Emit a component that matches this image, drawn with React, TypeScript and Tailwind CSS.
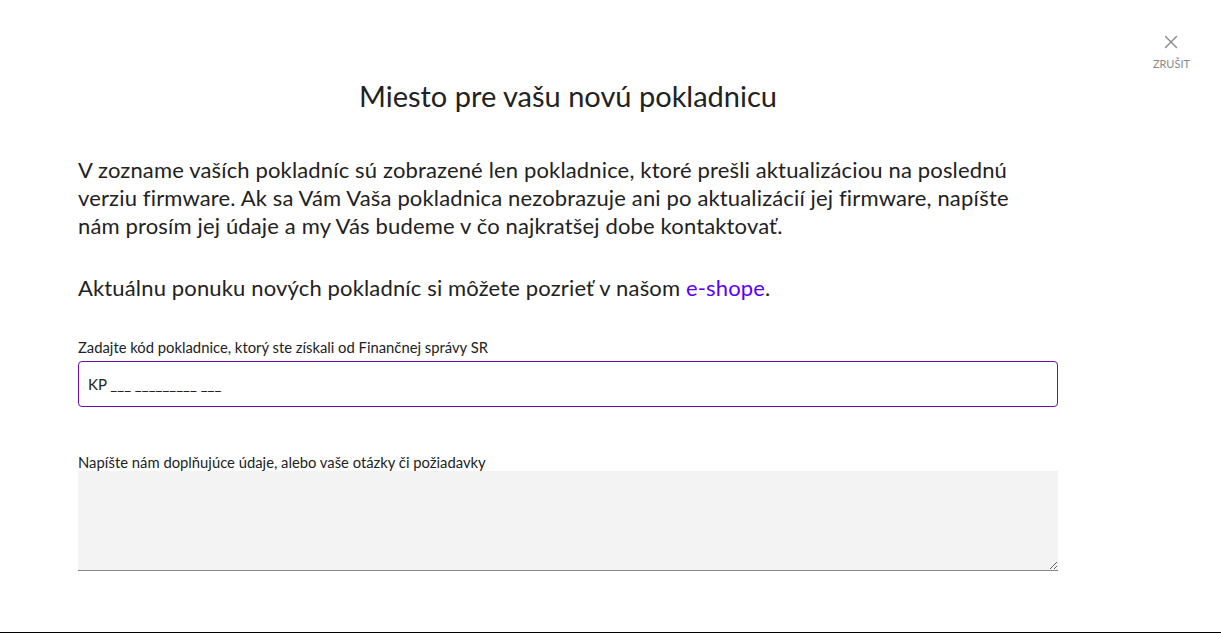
import { X } from "lucide-react";

export default function App() {
    return (
        <div className="relative h-[633px] w-full bg-white border-b border-black font-['Lato',sans-serif] text-[#222]">
            <button className="absolute right-[31px] top-[31px] flex flex-col items-center text-[#888]">
                <X className="w-[22px] h-[22px]" strokeWidth={1.5} />
                <span className="text-[11px] leading-[14px] mt-[4px]">ZRUŠIT</span>
            </button>
            <div className="w-[980px] ml-[78px] pt-[78px]">
                <h1 className="text-center text-[29px] leading-[36px] text-[#222]">Miesto pre vašu novú pokladnicu</h1>
                <p className="mt-[42px] pr-[8px] text-[22px] leading-[28px] tracking-[0.15px]">
                    V zozname vaších pokladníc sú zobrazené len pokladnice, ktoré prešli aktualizáciou na poslednú verziu firmware. Ak sa Vám Vaša pokladnica nezobrazuje ani po aktualizácií jej firmware, napíšte nám prosím jej údaje a my Vás budeme v čo najkratšej dobe kontaktovať.
                </p>
                <p className="mt-[34px] text-[22px] leading-[28px] tracking-[0.15px]">
                    Aktuálnu ponuku nových pokladníc si môžete pozrieť v našom <a className="text-[#5a00ff]">e-shope</a>.
                </p>
                <label className="block mt-[36px] text-[14.8px] leading-[18px]">Zadajte kód pokladnice, ktorý ste získali od Finančnej správy SR</label>
                <input
                    className="mt-[5px] block w-full h-[46px] px-[9px] border border-[#6a0dad] rounded-[4px] text-[15px] outline-none"
                    defaultValue="KP ___ _________ ___"
                />
                <label className="block mt-[46px] text-[14.8px] leading-[18px]">Napíšte nám doplňujúce údaje, alebo vaše otázky či požiadavky</label>
                <textarea className="block w-full h-[100px] bg-[#f3f3f3] border-b border-[#888] outline-none px-[9px] py-[8px] text-[15px]" />
            </div>
        </div>
    );
}
